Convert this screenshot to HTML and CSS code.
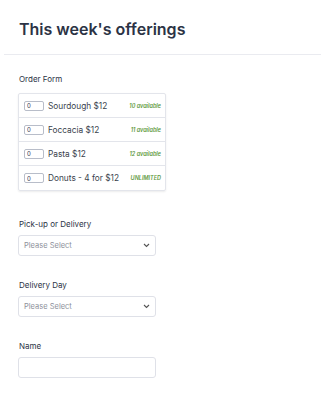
FILE: index.html
```html
<!DOCTYPE html>
<html lang="en">
<head>
    <meta charset="UTF-8">
    <meta name="viewport" content="width=device-width, initial-scale=1.0">
    <title>This week's offerings</title>
    <link rel="stylesheet" href="styles.css">
</head>
<body>
    <div class="header">
        <h1>This week's offerings</h1>
    </div>
    <form class="form">
        <div class="field field-products">
            <label>Order Form</label>
            <div class="products">
                <div class="product">
                    <input type="text" class="qty" value="0">
                    <span class="name">Sourdough $12</span>
                    <span class="stock">10 available</span>
                </div>
                <div class="product">
                    <input type="text" class="qty" value="0">
                    <span class="name">Foccacia $12</span>
                    <span class="stock">11 available</span>
                </div>
                <div class="product">
                    <input type="text" class="qty" value="0">
                    <span class="name">Pasta $12</span>
                    <span class="stock">12 available</span>
                </div>
                <div class="product">
                    <input type="text" class="qty" value="0">
                    <span class="name">Donuts - 4 for $12</span>
                    <span class="stock">UNLIMITED</span>
                </div>
            </div>
        </div>
        <div class="field">
            <label>Pick-up or Delivery</label>
            <div class="select">
                <span>Please Select</span>
                <svg width="7" height="5" viewBox="0 0 7 5"><path d="M1 1l2.5 2.5L6 1" fill="none" stroke="#555" stroke-width="1.1"/></svg>
            </div>
        </div>
        <div class="field">
            <label>Delivery Day</label>
            <div class="select">
                <span>Please Select</span>
                <svg width="7" height="5" viewBox="0 0 7 5"><path d="M1 1l2.5 2.5L6 1" fill="none" stroke="#555" stroke-width="1.1"/></svg>
            </div>
        </div>
        <div class="field">
            <label>Name</label>
            <input type="text" class="text-input">
        </div>
    </form>
</body>
</html>
```
FILE: styles.css
```css
body {
    margin: 0;
    padding: 0;
    font-family: Inter, "Noto Sans", sans-serif;
    color: #2c3345;
    background: #fff;
}
.header {
    margin: 0 4px;
    padding: 18px 15px 14px;
    border-bottom: 1px solid #eaebf0;
}
h1 {
    margin: 0;
    font-size: 16px;
    font-weight: 600;
    line-height: 22px;
}
.form {
    padding: 18px 18px 0;
}
.field {
    margin-bottom: 23px;
}
.field-products {
    margin-bottom: 27px;
}
label {
    display: block;
    font-size: 8px;
    font-weight: 400;
    line-height: 12px;
    margin: 0 1px 5px;
}
.field-products label {
    margin-bottom: 8px;
}
.products {
    width: 148px;
    border: 1px solid #e3e5eb;
    border-radius: 2px;
    box-shadow: 0 1px 2px rgba(0, 0, 0, 0.08);
    box-sizing: border-box;
}
.product {
    display: flex;
    align-items: center;
    height: 24px;
    padding: 0 4px 0 5px;
    border-bottom: 1px solid #e3e5eb;
    box-sizing: border-box;
}
.product:last-child {
    border-bottom: none;
}
.qty {
    width: 20px;
    height: 10px;
    padding: 0 2px;
    margin: 0 4px 0 0;
    border: 1px solid #b8bdc9;
    border-radius: 2px;
    font-family: inherit;
    font-size: 6px;
    color: #2c3345;
    box-sizing: border-box;
}
.name {
    flex: 1;
    font-size: 8.3px;
    color: #3a3f4d;
}
.stock {
    font-size: 5.5px;
    font-weight: 600;
    font-style: italic;
    color: #5f9a42;
}
.select {
    display: flex;
    align-items: center;
    justify-content: space-between;
    width: 138px;
    height: 21px;
    padding: 0 5px;
    border: 1px solid #dfe1e8;
    border-radius: 3px;
    box-sizing: border-box;
    font-size: 7.5px;
    color: #8d909a;
}
.text-input {
    display: block;
    width: 138px;
    height: 21px;
    margin: 0;
    border: 1px solid #dfe1e8;
    border-radius: 3px;
    box-sizing: border-box;
}
```
